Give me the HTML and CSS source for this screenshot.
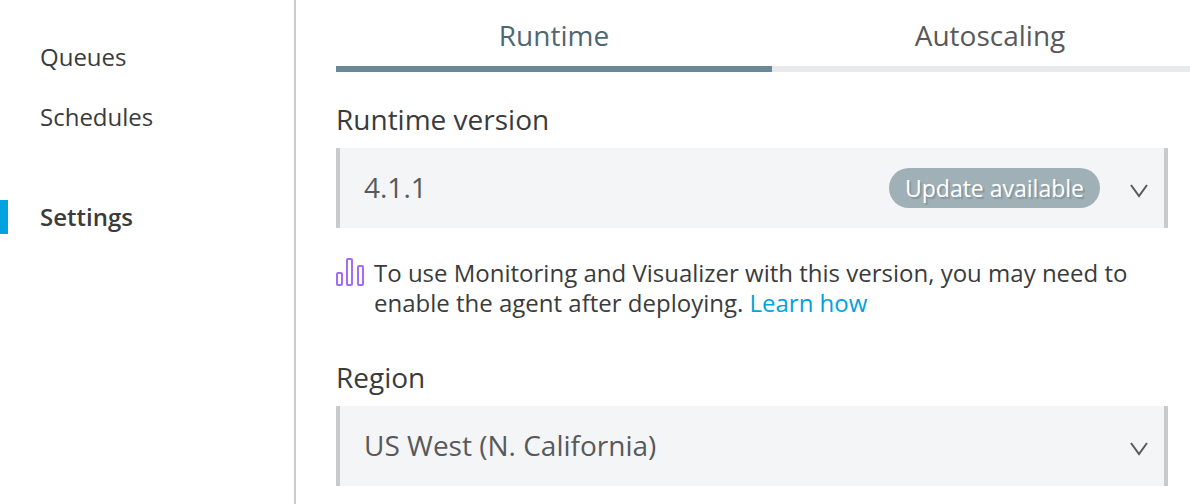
FILE: index.html
```html
<!DOCTYPE html>
<html lang="en">
<head>
<meta charset="utf-8">
<title>Runtime settings</title>
<link rel="stylesheet" href="styles.css">
</head>
<body>
<nav class="sidebar">
  <a class="nav-link" href="#queues">Queues</a>
  <a class="nav-link" href="#schedules">Schedules</a>
  <a class="nav-link nav-link-current" href="#settings">Settings</a>
</nav>
<main class="content">
  <div class="tabs" role="tablist">
    <button class="tab tab-active" role="tab" aria-selected="true">Runtime</button>
    <button class="tab" role="tab" aria-selected="false">Autoscaling</button>
  </div>
  <form class="form">
    <label class="label" for="version">Runtime version</label>
    <div class="field">
      <select class="select" id="version"><option>4.1.1</option></select>
      <span class="badge">Update available</span>
      <svg class="chevron" viewBox="0 0 18 14" aria-hidden="true"><path d="M1 1l8 11L17 1"/></svg>
    </div>
    <div class="note">
      <svg class="chart" viewBox="0 0 28 28" aria-hidden="true"><rect x="1" y="15" width="5" height="12" rx="1"/><rect x="11" y="1" width="5" height="26" rx="1"/><rect x="22" y="8" width="5" height="19" rx="1"/></svg>
      <p class="note-text">To use Monitoring and Visualizer with this version, you may need to enable the agent after deploying. <a class="link" href="#learn">Learn how</a></p>
    </div>
    <label class="label" for="region">Region</label>
    <div class="field">
      <select class="select" id="region"><option>US West (N. California)</option></select>
      <svg class="chevron" viewBox="0 0 18 14" aria-hidden="true"><path d="M1 1l8 11L17 1"/></svg>
    </div>
  </form>
</main>
</body>
</html>
```
FILE: styles.css
```css
* { box-sizing: border-box; }
body {
  margin: 0;
  min-height: 100vh;
  display: grid;
  grid-template-columns: 296px 1fr;
  font-family: "Open Sans", sans-serif;
  font-size: 24px;
  color: #3a3b3c;
  background: #fff;
}
.sidebar {
  display: flex;
  flex-direction: column;
  gap: 26px;
  padding-top: 40px;
  border-right: 2px solid #cacbcc;
}
.nav-link {
  padding-left: 40px;
  line-height: 34px;
  color: inherit;
  text-decoration: none;
}
.nav-link-current {
  margin-top: 40px;
  padding-left: 32px;
  border-left: 8px solid #00a2df;
  font-weight: 600;
}
.content { padding-left: 40px; overflow: hidden; }
.tabs { display: grid; grid-template-columns: 1fr 1fr; margin-right: -18px; }
.tab {
  height: 72px;
  padding: 4px 0 0;
  border: 0;
  border-bottom: 6px solid #e8e9ea;
  background: none;
  font: inherit;
  font-size: 28px;
  color: #58595a;
}
.tab-active { border-color: #698997; color: #506773; }
.form { padding: 28px 22px 18px 0; }
.label { display: block; font-size: 28px; line-height: 38px; margin-bottom: 10px; }
.field { position: relative; }
.select {
  display: block;
  width: 100%;
  height: 80px;
  padding: 0 24px 2px;
  appearance: none;
  border: solid #c8cacc;
  border-width: 0 4px;
  border-radius: 0;
  background: #f4f5f7;
  font: inherit;
  font-size: 28px;
  color: #58595a;
}
.badge {
  position: absolute;
  top: 20px;
  right: 68px;
  padding: 0 16px;
  border-radius: 20px;
  background: #a0b0b7;
  color: #fff;
  font-size: 23px;
  line-height: 40px;
  text-shadow: 2px 2px 1px #84959d;
  pointer-events: none;
}
.chevron {
  position: absolute;
  top: 36px;
  right: 20px;
  width: 18px;
  height: 14px;
  fill: none;
  stroke: #58595a;
  stroke-width: 2;
  pointer-events: none;
}
.note { display: flex; gap: 10px; margin: 30px 0 40px; }
.chart { flex: none; width: 28px; height: 28px; fill: none; stroke: #a26bfa; stroke-width: 2; }
.note-text { margin: 0; line-height: 30px; }
.link { color: #00a2df; text-decoration: none; }
```
